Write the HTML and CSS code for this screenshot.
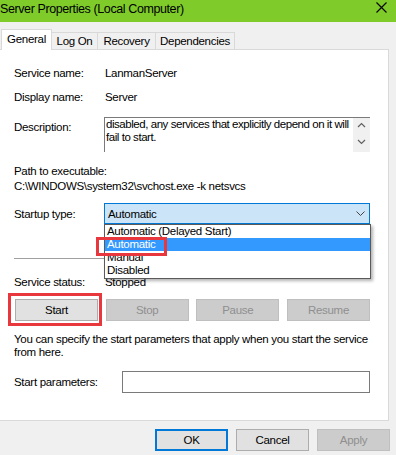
FILE: index.html
```html
<!DOCTYPE html>
<html lang="en">
  <head>
    <link rel="stylesheet" href="styles.css">
  </head>
  <body>
    <div class="dialog">
      <div class="titlebar">
        <span class="title">Server Properties (Local Computer)</span>
        <svg class="close" width="11" height="11" viewBox="0 0 11 11">
          <path d="M0.5 0.5 L10.5 10.5 M10.5 0.5 L0.5 10.5" stroke="#000" stroke-width="1.1" fill="none" />
        </svg>
      </div>

      <div class="tabs">
        <div class="tab active tab-general">General</div>
        <div class="tab tab-logon">Log On</div>
        <div class="tab tab-recovery">Recovery</div>
        <div class="tab tab-deps">Dependencies</div>
      </div>

      <div class="panel">
        <div class="row row-name">
          <span class="label">Service name:</span>
          <span>LanmanServer</span>
        </div>
        <div class="row row-display">
          <span class="label">Display name:</span>
          <span>Server</span>
        </div>
        <div class="row row-desc">
          <span class="label">Description:</span>
          <div class="desc-box">
            <div class="desc-text">disabled, any services that explicitly depend on it will<br>fail to start.</div>
            <svg class="scroll" width="17" height="34" viewBox="0 0 17 34">
              <polyline points="5,9 8.5,5.5 12,9" stroke="#606060" stroke-width="1.2" fill="none" />
              <polyline points="5,22 8.5,25.5 12,22" stroke="#606060" stroke-width="1.2" fill="none" />
            </svg>
          </div>
        </div>
        <div class="row row-path">Path to executable:</div>
        <div class="row row-exe">C:\WINDOWS\system32\svchost.exe -k netsvcs</div>
        <div class="row row-startup">
          <span class="label">Startup type:</span>
          <div class="select">
            <span>Automatic</span>
            <svg class="chev" width="9" height="6" viewBox="0 0 9 6">
              <polyline points="0.5,0.5 4.5,4.5 8.5,0.5" stroke="#444" stroke-width="1" fill="none" />
            </svg>
          </div>
        </div>
        <div class="sep"></div>
        <div class="row row-status">
          <span class="label">Service status:</span>
          <span>Stopped</span>
        </div>
        <div class="actions">
          <div class="btn">Start</div>
          <div class="btn disabled">Stop</div>
          <div class="btn disabled">Pause</div>
          <div class="btn disabled">Resume</div>
        </div>
        <p class="help">You can specify the start parameters that apply when you start the service<br>from here.</p>
        <div class="row row-params">
          <span class="label">Start parameters:</span>
          <div class="input"></div>
        </div>
      </div>

      <div class="footer">
        <div class="btn btn-small default">OK</div>
        <div class="btn btn-small">Cancel</div>
        <div class="btn btn-small disabled">Apply</div>
      </div>

      <!-- open combobox list, drawn over the panel -->
      <div class="dropdown">
        <div class="item">Automatic (Delayed Start)</div>
        <div class="item selected">Automatic</div>
        <div class="item">Manual</div>
        <div class="item">Disabled</div>
      </div>

      <div class="mark mark-auto"></div>
      <div class="mark mark-start"></div>
    </div>
  </body>
</html>
```

FILE: styles.css
```css
body {
  margin: 0;
  font-family: "Liberation Sans", Arial, sans-serif;
  font-size: 11.5px;
  letter-spacing: -0.3px;
  color: #000;
}

.dialog {
  position: relative;
  width: 396px;
  height: 455px;
  overflow: hidden;
  background: #f0f0f0;
}

/* title bar */
.titlebar {
  height: 22px;
  display: flex;
  align-items: flex-start;
  background: #7fcb29;
}
.title {
  padding-top: 2px;
  font-size: 12.5px;
  line-height: 15px;
  letter-spacing: -0.4px;
}
.close {
  margin: 2px 9px 0 auto;
}

/* tabs */
.tabs {
  height: 27px;
  display: flex;
  align-items: flex-end;
  padding-left: 1px;
}
.tab {
  height: 17px;
  box-sizing: border-box;
  border: 1px solid #d9d9d9;
  border-bottom: none;
  margin-left: -1px;
  line-height: 16px;
  text-align: center;
  background: #f0f0f0;
}
.tab.active {
  height: 21px;
  margin-left: 0;
  margin-bottom: -1px;
  position: relative;
  z-index: 1;
  line-height: 19px;
  background: #fff;
}
.tab-general { width: 51px; }
.tab-logon { width: 47px; }
.tab-recovery { width: 59px; }
.tab-deps { width: 80px; }

/* page body */
.panel {
  width: 390px;
  height: 372px;
  margin-left: -1px;
  box-sizing: border-box;
  border: 1px solid #d9d9d9;
  padding-left: 14px;
  background: #fff;
}
.row {
  display: flex;
  height: 14px;
  line-height: 14px;
}
.label {
  width: 91px;
  flex: none;
}
.row-name { margin-top: 16px; }
.row-display { margin-top: 10px; }
.row-desc {
  height: 35px;
  margin-top: 13px;
}
.row-desc .label {
  width: 90px;
  padding-top: 3px;
}
.desc-box {
  width: 266px;
  height: 35px;
  box-sizing: border-box;
  display: flex;
  border-top: 1px solid #7a7a7a;
  border-left: 1px solid #7a7a7a;
}
.desc-text {
  flex: 1;
  padding-left: 1px;
  line-height: 13px;
  letter-spacing: -0.45px;
  white-space: nowrap;
  overflow: hidden;
}
.scroll {
  flex: none;
  background: #f0f0f0;
}
.row-path { margin-top: 12px; }
.row-exe { margin-top: 1px; }
.row-startup {
  height: 21px;
  margin-top: 10px;
}
.row-startup .label {
  width: 90px;
  padding-top: 4px;
}
.select {
  width: 266px;
  height: 21px;
  box-sizing: border-box;
  display: flex;
  align-items: center;
  padding-left: 3px;
  border: 1px solid #0078d7;
  background: #cce4f7;
}
.chev {
  margin: 0 4px 0 auto;
}
.sep {
  width: 356px;
  height: 1px;
  margin-top: 34px;
  background: #a0a0a0;
}
.row-status { margin-top: 16px; }

.actions {
  width: 355px;
  margin: 10px 0 0 1px;
  display: flex;
  justify-content: space-between;
}
.btn {
  width: 83px;
  height: 22px;
  box-sizing: border-box;
  border: 1px solid #adadad;
  background: #e1e1e1;
  line-height: 20px;
  text-align: center;
}
.btn.disabled {
  border-color: #bfbfbf;
  background: #cccccc;
  color: #8f8f8f;
}
.help {
  margin: 12px 0 0;
  line-height: 13px;
}
.row-params {
  height: 22px;
  margin-top: 12px;
}
.row-params .label {
  width: 108px;
  padding-top: 4px;
}
.input {
  width: 248px;
  height: 22px;
  box-sizing: border-box;
  border: 1px solid #7a7a7a;
}

/* dialog buttons */
.footer {
  display: flex;
  justify-content: flex-end;
  gap: 8px;
  padding: 8px 6px 0 0;
}
.btn-small {
  width: 73px;
}
.btn.default {
  border: 2px solid #0078d7;
  line-height: 18px;
}

/* combobox list */
.dropdown {
  position: absolute;
  left: 104px;
  top: 224px;
  width: 267px;
  height: 55px;
  box-sizing: border-box;
  border: 1px solid #5a5a5a;
  background: #fff;
  box-shadow: 2px 2px 3px rgba(0, 0, 0, 0.3);
  z-index: 2;
}
.item {
  height: 13px;
  line-height: 13px;
  padding-left: 2px;
}
.item.selected {
  background: #3399ff;
  color: #fff;
}

/* red highlight frames */
.mark {
  position: absolute;
  box-sizing: border-box;
  border: 3px solid #e8383d;
  z-index: 3;
}
.mark-auto {
  left: 96px;
  top: 237px;
  width: 71px;
  height: 19px;
}
.mark-start {
  left: 8px;
  top: 293px;
  width: 94px;
  height: 33px;
}
```
